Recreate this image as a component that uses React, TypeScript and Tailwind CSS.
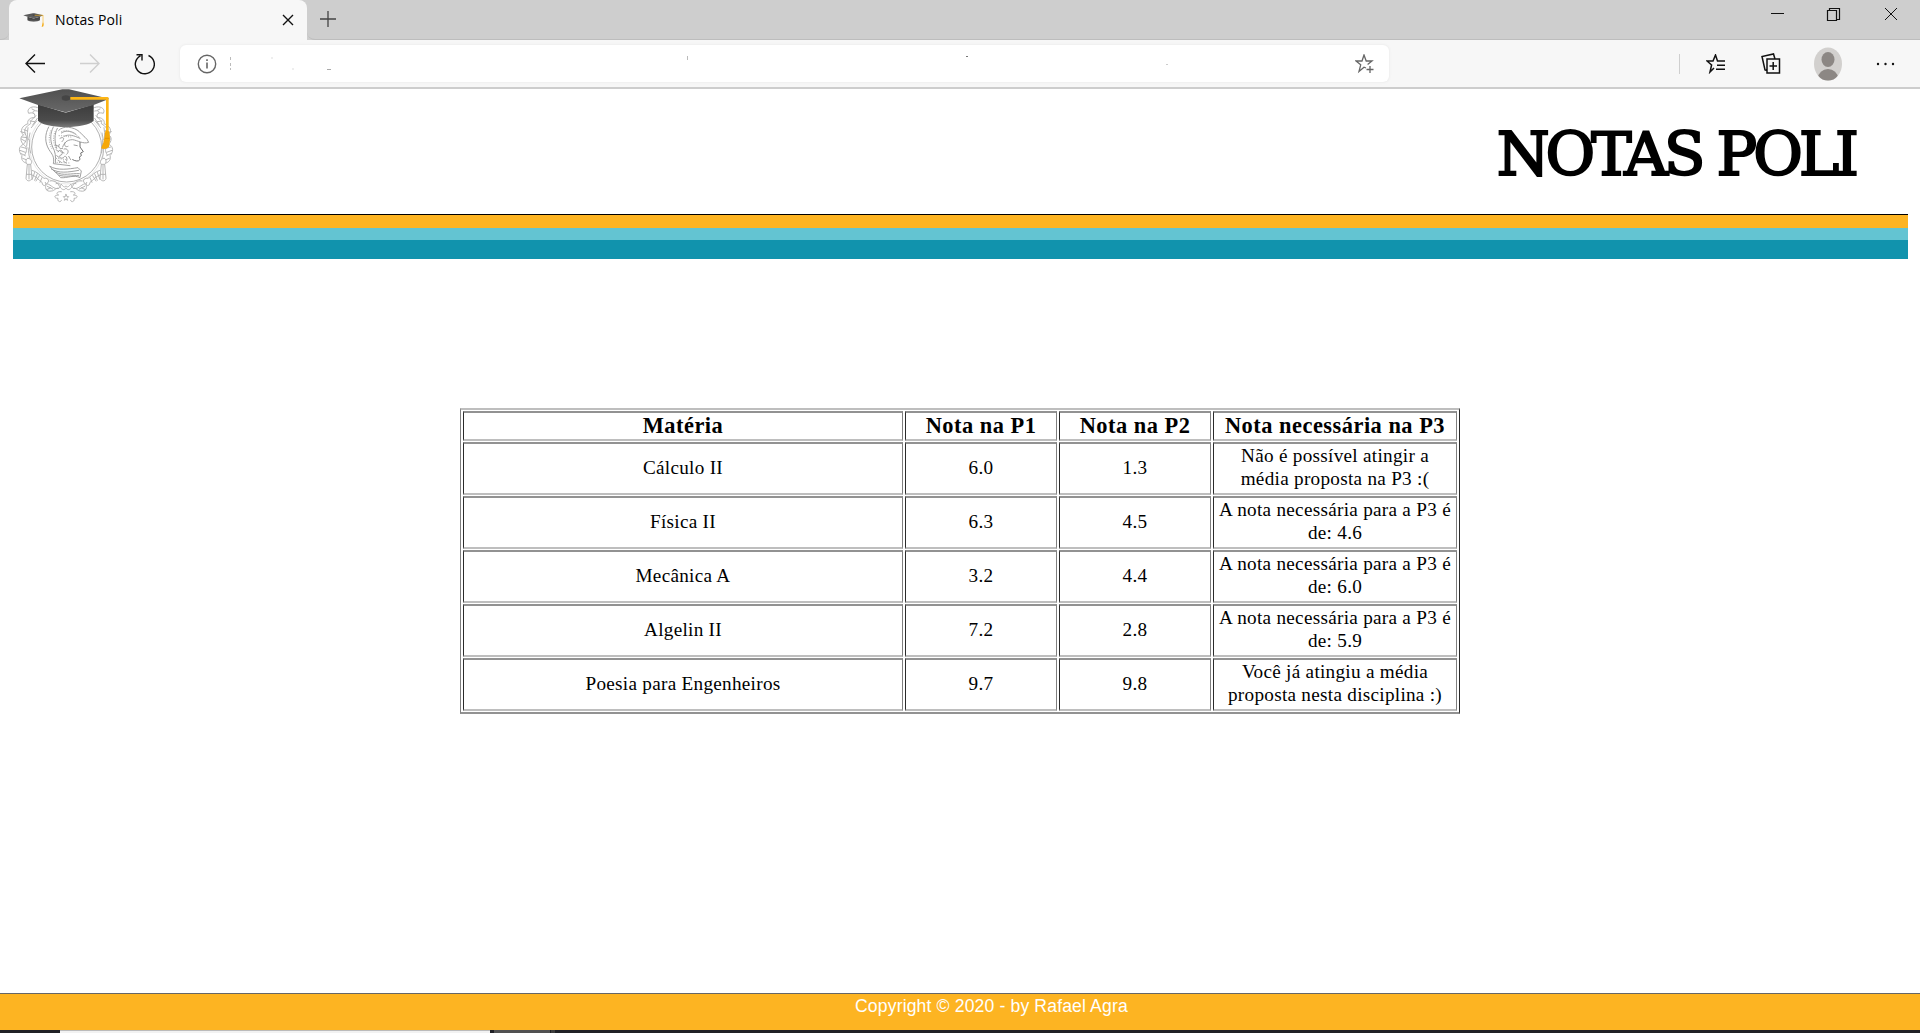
import React from "react";

const rows = [
  ["Cálculo II", "6.0", "1.3", "Não é possível atingir a", "média proposta na P3 :("],
  ["Física II", "6.3", "4.5", "A nota necessária para a P3 é", "de: 4.6"],
  ["Mecânica A", "3.2", "4.4", "A nota necessária para a P3 é", "de: 6.0"],
  ["Algelin II", "7.2", "2.8", "A nota necessária para a P3 é", "de: 5.9"],
  ["Poesia para Engenheiros", "9.7", "9.8", "Você já atingiu a média", "proposta nesta disciplina :)"],
];

function Cap() {
  return (
    <>
      <path d="M114 70V119Q133 137 197 138Q261 137 281 119V70L197 95Z" fill="url(#band)" />
      <path d="M58 52L187 25H207L328 53L281 72L197 94L114 72Z" fill="url(#board)" />
      <ellipse cx="198" cy="51" rx="13" ry="8" fill="#454545" />
      <path d="M211 52H322V152" fill="none" stroke="#fdb515" strokeWidth="8" strokeLinejoin="round" />
      <path d="M316 150Q322 146 328 152Q330 166 330 178L327 198Q316 208 303 202Q311 188 313 170Z" fill="#f6a808" />
      <path d="M315 172H329" stroke="#d58a00" strokeWidth="2" />
      <defs>
        <linearGradient id="board" x1="0" y1="0" x2="0" y2="1">
          <stop offset="0" stopColor="#505050" />
          <stop offset="1" stopColor="#686868" />
        </linearGradient>
        <linearGradient id="band" x1="0" y1="0" x2="0" y2="1">
          <stop offset="0" stopColor="#3c3c3c" />
          <stop offset=".7" stopColor="#4c4c4c" />
          <stop offset="1" stopColor="#7a7a7a" />
        </linearGradient>
      </defs>
    </>
  );
}

function Scroll() {
  return (
    <>
      <path d="M118 82C96 70 78 84 86 97C98 93 108 98 104 110C92 108 80 118 84 128C66 134 58 150 70 162" />
      <path d="M112 90C98 86 94 96 104 100M108 104C98 116 90 116 92 128C78 136 70 146 76 160M112 112L98 132M96 84L104 88M90 120L104 122M110 120L94 140" />
      <path d="M70 162C58 168 62 182 70 190C54 196 56 214 66 224C62 236 70 244 78 246" />
      <path d="M76 160C84 170 78 182 70 190C82 198 82 210 74 222M64 174L78 182M60 208L76 214M84 140C80 160 84 176 80 196M62 152L76 156M72 146L82 150M66 168L80 170M64 198L78 202M64 218L76 224M68 232L78 236" />
      <path d="M84 200C88 212 84 222 90 232M88 176C90 190 86 200 92 216M90 156L86 176" />
      <path d="M84 232C76 232 76 246 82 250L78 292C80 302 92 302 96 292L92 250C98 244 94 232 84 232ZM82 250H92M87 252V294M80 280H95" />
      <path d="M96 268C112 272 118 282 132 292C146 290 150 302 140 308C156 312 160 326 176 322C188 314 178 302 168 308M96 282C110 286 116 298 126 304C128 320 142 314 136 304" />
      <path d="M140 308C132 318 138 334 154 330C164 330 168 318 176 322M104 274L96 296M118 284L108 300M112 278L104 298M126 290L120 304M150 300C160 296 172 304 176 312C184 326 192 330 198 322M184 310C190 318 194 320 198 316M142 316L158 324M140 326L152 320" />
      <path d="M184 332C172 330 166 338 176 342C160 342 162 352 174 352C170 362 184 366 184 358" />
    </>
  );
}

function Crest() {
  return (
    <svg className="block h-[115px] w-[130px]" viewBox="0 24 390 345">
      <g fill="none" stroke="#b2b2b2" strokeWidth="2.8" strokeLinecap="round">
        <circle cx="200" cy="198" r="105" stroke="#aaa" />
        <circle cx="200" cy="198" r="111" stroke="#dcdcdc" strokeWidth="2" />
        <Scroll />
        <g transform="translate(396 0) scale(-1 1)">
          <Scroll />
        </g>
        <path d="M198 340L200 346L206 347L201 352L203 358L198 355L193 358L195 352L190 347L196 346Z" stroke="#999" strokeWidth="2" />
      </g>
      <g fill="none" stroke="#9a9a9a" strokeWidth="2.8" strokeLinecap="round" strokeLinejoin="round">
        <path d="M146 138C134 160 134 184 147 206C156 220 164 226 160 248L210 254" />
        <path d="M160 138C150 158 150 178 158 198C166 212 168 226 166 246M172 142C162 160 164 184 170 202" />
        <path d="M176 148C190 132 222 138 238 152C250 166 262 172 266 184C250 190 232 178 218 176C200 176 192 186 188 198" />
        <path d="M184 156C198 146 216 150 228 160M192 166C206 158 222 164 240 172M180 172C190 166 196 172 186 182" />
        <path d="M240 184L240 198L250 212L242 216L244 224L238 228C244 240 232 244 218 236" stroke="#666" />
        <path d="M222 192L232 194M174 212C184 200 192 214 184 222C174 222 180 236 190 230C196 220 204 230 200 240" />
        <path d="M168 206L176 212M170 224L178 230M174 238L184 244M192 204C202 200 210 212 200 220M166 192L176 196" />
        <path d="M178 190C172 198 180 206 188 202M196 184C190 192 196 200 204 196M182 212L192 216M190 240L198 246M206 226L212 236" />
        <path d="M150 256C172 270 206 264 234 260L244 270L240 290C222 280 202 292 182 290C172 276 158 270 150 256Z" />
        <path d="M154 264C176 278 204 274 236 268M168 274C190 286 214 276 238 278M176 282C196 290 218 282 236 284" />
      </g>
      <g fill="none" stroke="#aaa" strokeWidth="3" strokeDasharray="3 4">
        <path d="M153 148C145 166 146 184 156 204M166 150C158 166 160 188 168 204M184 152C198 144 220 154 240 170M176 164C196 164 204 168 214 168M168 232L202 236M170 244L208 246" />
      </g>
      <Cap />
    </svg>
  );
}

function Head({ children }: { children: React.ReactNode }) {
  return (
    <div className="flex items-center justify-center border-x border-y-2 border-t-[#929292] border-r-[#808080] border-b-[#bebebe] border-l-[#2b2b2b] pb-px text-[22.4px] leading-[25px] font-bold tracking-[0.5px] whitespace-nowrap">
      {children}
    </div>
  );
}

function Cell({ children }: { children: React.ReactNode }) {
  return (
    <div className="flex flex-col items-center justify-center border-x border-y-2 border-t-[#929292] border-r-[#808080] border-b-[#bebebe] border-l-[#2b2b2b] pb-[3px] text-[19.2px] leading-[23px] tracking-[0.28px] whitespace-nowrap">
      {children}
    </div>
  );
}

export default function App() {
  return (
    <div className="flex h-[1033px] w-[1920px] flex-col overflow-hidden bg-white text-black">
      {/* Tab strip */}
      <div className="flex h-10 shrink-0 bg-[#cecece]">
        <div className="w-[9px] rounded-br-lg border-b border-[#c0c0c0]" />
        <div className="flex w-[298px] items-center rounded-t-lg bg-[#f7f7f7]">
          <svg className="ml-[14px] h-[16px] w-[21px]" viewBox="55 20 280 190">
            <Cap />
          </svg>
          <span className="ml-[11px] font-['Open_Sans'] text-[14px] leading-5 tracking-[0.15px]">Notas Poli</span>
          <svg className="ml-auto mr-[13px] size-3" viewBox="0 0 12 12" stroke="#111" strokeWidth="1.4">
            <path d="M1 1L11 11M11 1L1 11" />
          </svg>
        </div>
        <div className="flex flex-1 rounded-bl-lg border-b border-[#bdbdbd]">
          <svg className="mt-[11px] ml-[13px] size-4" viewBox="0 0 16 16" stroke="#444" strokeWidth="1.3">
            <path d="M8 0V16M0 8H16" />
          </svg>
          <svg className="ml-auto mr-[22px] h-8 w-[128px]" viewBox="0 0 128 32" fill="none" stroke="#111">
            <path d="M1 13.5H14" />
            <path d="M57.5 10.500H66.500V20.500H57.500ZM59.500 10V8.500H69.500V19.500H67" strokeWidth="1.2" />
            <path d="M115 8L127 20M127 8L115 20" />
          </svg>
        </div>
      </div>

      {/* Toolbar */}
      <div className="flex h-[49px] shrink-0 items-center border-b-2 border-[#cdcdcd] bg-[#f7f7f7]">
        <svg className="ml-[25px] h-6 w-[130px] shrink-0" viewBox="0 0 130 24" fill="none" strokeWidth="1.4">
          <path d="M10 2.500L1 11.500L10 20.500M1 11.500H20" stroke="#111" />
          <path d="M65 2.500L74 11.500L65 20.500M55 11.500H74" stroke="#cfcfcf" />
          <path d="M123.500 3.500A9.500 9.500 0 1 1 115.500 3.800M111.500 2.700H117V8.500" stroke="#111" />
        </svg>
        <div className="ml-[25px] flex h-[37px] w-[1209px] shrink-0 items-center rounded-md bg-white shadow-[0_0_3px_#e4e4e4]">
          <svg className="ml-[17px] size-5" viewBox="0 0 20 20" fill="none" stroke="#666" strokeWidth="1.4">
            <circle cx="10" cy="10" r="8.700" />
            <path d="M10 8.500V14.500M10 5.300V6.900" strokeWidth="1.600" />
          </svg>
          <svg className="ml-[13px] h-5 w-[1060px]" viewBox="0 0 1060 20" stroke="#ccc">
            <path d="M.5 3V6M.5 9V12M.5 14V16" stroke="#bbb" />
            <path d="M41 4H43M62 15H64" stroke="#ddd" />
            <path d="M97 15.500H101" stroke="#aaa" />
            <path d="M457.500 2V6" stroke="#bbb" />
            <path d="M736 2.500H738" stroke="#777" />
            <path d="M936 10.500H938" stroke="#ccc" />
          </svg>
          <svg className="ml-auto mr-[14px] h-5 w-5 shrink-0" viewBox="0 0 20 20" fill="none" stroke="#666" strokeWidth="1.300">
            <path d="M11 14L9 13.200L4 17.500L5.700 10.800L1 7H7L9 1L11.200 7H17L12.600 10.500" />
            <path d="M15 12V19M11.500 15.500H18.500" />
          </svg>
        </div>
        <div className="ml-auto h-5 w-px bg-[#cfcfcf]" />
        <svg className="ml-[26px] h-5 w-5" viewBox="0 0 20 20" fill="none" stroke="#111" strokeWidth="1.500">
          <path d="M8 14L4 18L5.600 11L1 7H7L9.500 1L11.500 7H19M11 11.200H19M10 15.200H19" />
        </svg>
        <svg className="ml-[35px] h-6 w-5" viewBox="0 0 20 24" fill="none" stroke="#111" strokeWidth="1.500">
          <path d="M6 7H18.500V21H6ZM12.200 10V18M8.500 14H16M14 7L12.500 2L1 4.500L4 18L6 18.500" />
        </svg>
        <svg className="ml-[33px] h-[34px] w-7" viewBox="0 0 28 34">
          <clipPath id="face"><ellipse cx="14" cy="17" rx="14" ry="16.500" /></clipPath>
          <ellipse cx="14" cy="17" rx="14" ry="16.500" fill="#d2d0ce" />
          <g fill="#8c8784" clipPath="url(#face)">
            <ellipse cx="14" cy="12.500" rx="6.500" ry="7.500" />
            <ellipse cx="14" cy="31" rx="10" ry="9" />
          </g>
        </svg>
        <svg className="mr-[25px] ml-[34px] h-2 w-[19px]" viewBox="0 0 19 8" fill="#111">
          <circle cx="2" cy="4" r="1.200" /><circle cx="9.500" cy="4" r="1.200" /><circle cx="17" cy="4" r="1.200" />
        </svg>
      </div>

      {/* Page header */}
      <header className="flex h-[125px] shrink-0 justify-between">
        <Crest />
        <h1 className="mt-[29px] mr-[65px] font-['DejaVu_Serif',serif] text-[60.500px] leading-[72px] tracking-[-4px] whitespace-nowrap [-webkit-text-stroke:2.2px_#000]">
          NOTAS POLI
        </h1>
      </header>
      <div className="mr-[12px] ml-[13px] shrink-0 border-t border-black">
        <div className="h-[13px] bg-[#fdb422]" />
        <div className="h-[12px] bg-[#63c4d2]" />
        <div className="h-[19px] bg-[#1193ad]" />
      </div>

      {/* Grades */}
      <main className="flex-1 pt-[149px]">
        <div className="ml-[460px] grid h-[306px] w-[1000px] grid-cols-[440px_152px_152px_244px] grid-rows-[30px_53px_53px_53px_53px_53px] gap-x-[2px] gap-y-px border-x border-y-2 border-t-[#bebebe] border-r-[#2b2b2b] border-b-[#929292] border-l-[#808080] px-[2px] py-px font-['Liberation_Serif',serif]">
          <Head>Matéria</Head>
          <Head>Nota na P1</Head>
          <Head>Nota na P2</Head>
          <Head>Nota necessária na P3</Head>
          {rows.map(([name, p1, p2, first, second]) => (
            <React.Fragment key={name}>
              <Cell>{name}</Cell>
              <Cell>{p1}</Cell>
              <Cell>{p2}</Cell>
              <Cell>
                <span>{first}</span>
                <span>{second}</span>
              </Cell>
            </React.Fragment>
          ))}
        </div>
      </main>

      <footer className="h-[37px] shrink-0 border-t border-[#666] bg-[#fdb422] pt-[2px] pl-[855px] font-['Liberation_Sans',sans-serif] text-[17.6px] leading-[20px] tracking-[0.14px] text-white">
        Copyright © 2020 - by Rafael Agra
      </footer>
      <div className="flex h-[3px] shrink-0 bg-[#202126]">
        <div className="ml-[60px] w-[430px] border-t border-[#bbb] bg-[#f2f2f2]" />
        <div className="ml-[4px] w-[56px] bg-[#515151]" />
        <div className="ml-px w-[4px] bg-[#3d3d3d]" />
      </div>
    </div>
  );
}
